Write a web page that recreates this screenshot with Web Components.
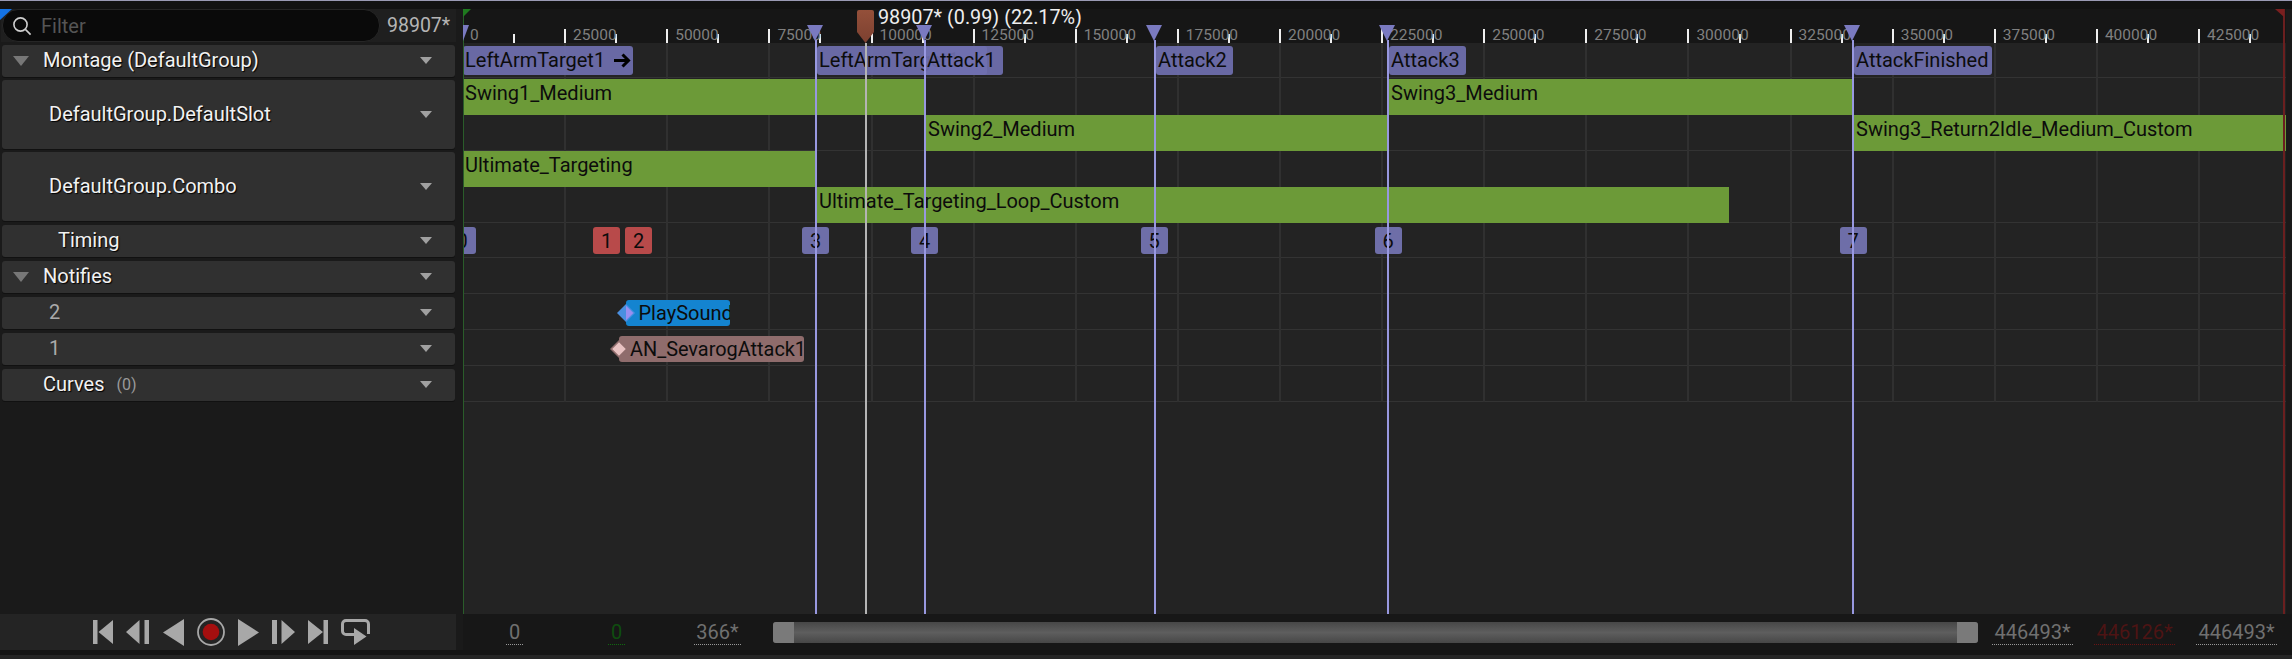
<!DOCTYPE html>
<html><head><meta charset="utf-8"><title>Montage</title>
<style>
html,body{margin:0;padding:0;background:#1a1a1a;width:2292px;height:659px;overflow:hidden;font-family:Roboto,"Liberation Sans",sans-serif}
</style></head><body>
<ue-app>
  <ue-sidebar slot="side">
    <ue-filter value="98907*"></ue-filter>
    <ue-row h="32" pad="43" expander>Montage (DefaultGroup)</ue-row>
    <ue-row h="69" pad="49">DefaultGroup.DefaultSlot</ue-row>
    <ue-row h="69" pad="49">DefaultGroup.Combo</ue-row>
    <ue-row h="32" pad="58" mt="1">Timing</ue-row>
    <ue-row h="32" pad="43" mt="1" expander>Notifies</ue-row>
    <ue-row h="32" pad="49" mt="1" dim>2</ue-row>
    <ue-row h="32" pad="49" mt="1" dim>1</ue-row>
    <ue-row h="32" pad="43" mt="1" count="(0)">Curves</ue-row>
  </ue-sidebar>
  <ue-timeline slot="time">
    <ue-ruler></ue-ruler>
    <ue-track h="35">
      <ue-clip kind="section" x="0" w="170" arrow>LeftArmTarget1</ue-clip>
      <ue-clip kind="section" x="354" w="170">LeftArmTarget1</ue-clip>
      <ue-clip kind="section" x="462" w="78">Attack1</ue-clip>
      <ue-clip kind="section" x="693" w="77">Attack2</ue-clip>
      <ue-clip kind="section" x="926" w="77">Attack3</ue-clip>
      <ue-clip kind="section" x="1391" w="138">AttackFinished</ue-clip>
    </ue-track>
    <ue-track h="73">
      <ue-clip kind="anim" y="1" x="0" w="461">Swing1_Medium</ue-clip>
      <ue-clip kind="anim" y="37" x="463" w="462">Swing2_Medium</ue-clip>
      <ue-clip kind="anim" y="1" x="926" w="464">Swing3_Medium</ue-clip>
      <ue-clip kind="anim" y="37" x="1391" w="432">Swing3_Return2Idle_Medium_Custom</ue-clip>
    </ue-track>
    <ue-track h="72">
      <ue-clip kind="anim" y="0" x="0" w="353">Ultimate_Targeting</ue-clip>
      <ue-clip kind="anim" y="36" x="354" w="912">Ultimate_Targeting_Loop_Custom</ue-clip>
    </ue-track>
    <ue-track h="35">
      <ue-mark x="-1" tone="purple">0</ue-mark>
      <ue-mark x="143.5" tone="red">1</ue-mark>
      <ue-mark x="175.5" tone="red">2</ue-mark>
      <ue-mark x="352.5" tone="purple">3</ue-mark>
      <ue-mark x="461.5" tone="purple">4</ue-mark>
      <ue-mark x="691" tone="purple">5</ue-mark>
      <ue-mark x="925" tone="purple">6</ue-mark>
      <ue-mark x="1390" tone="purple">7</ue-mark>
    </ue-track>
    <ue-track h="36"></ue-track>
    <ue-track h="36">
      <ue-notify x="163" w="104" tone="blue">PlaySound</ue-notify>
    </ue-track>
    <ue-track h="36">
      <ue-notify x="156" w="185" tone="rose">AN_SevarogAttack1</ue-notify>
    </ue-track>
    <ue-track h="36"></ue-track>
    <ue-overlay></ue-overlay>
  </ue-timeline>
  <ue-transport slot="transport"></ue-transport>
  <ue-range slot="range"></ue-range>
</ue-app>
<script>
function def(name,css,html,init){
  customElements.define(name,class extends HTMLElement{
    constructor(){super();this.attachShadow({mode:'open'});}
    connectedCallback(){
      this.shadowRoot.innerHTML='<style>'+css+'</style>'+(typeof html==='function'?html(this):html);
      if(init)init(this);
    }
  });
}
const STEP=102.12;
def('ue-app',`
:host{display:block;width:2292px;height:659px;position:relative;background:#1a1a1a;color:#eee;font:20px Roboto,"Liberation Sans",sans-serif}
.top{height:8px;border-top:1px solid #9a9ab4;background:#121212}
.main{display:grid;grid-template-columns:463px 1fr;height:605px}
.bottom{display:grid;grid-template-columns:463px 1fr;height:36px}
.foot{height:9px;display:flex;flex-direction:column;background:#141414}
.foot i{display:block;margin-top:5px;height:4px;background:#242424}
`,`<div class="top"></div>
<div class="main"><slot name="side"></slot><slot name="time"></slot></div>
<div class="bottom"><slot name="transport"></slot><slot name="range"></slot></div>
<div class="foot"><i></i></div>`);

def('ue-sidebar',`
:host{display:flex;flex-direction:column;gap:3px;position:relative;padding:0 8px 0 2px;background:#1a1a1a;box-sizing:border-box;height:605px}
.corner{position:absolute;left:0;top:0;width:0;height:0;border-top:11px solid #1473e6;border-right:12px solid transparent;z-index:2}
`,`<div class="corner"></div><slot></slot>`);

def('ue-filter',`
:host{display:flex;align-items:center;height:33px;margin:0 -1px;background:#1f1f1f}
.box{width:376px;height:31px;margin-left:1px;border-radius:16px;background:#0a0a0a;border:1px solid #262626;display:flex;align-items:center}
svg{margin-left:9px;flex:none}
.ph{margin-left:9px;color:#555;font-size:20px}
.val{margin-left:7px;color:#b5b5b5;font-size:19.500px}
`,el=>`<div class="box"><svg width="20" height="20" viewBox="0 0 20 20" fill="none" stroke="#cfcfcf" stroke-width="1.600"><circle cx="8.500" cy="8.500" r="6.600"/><path d="M13.400 13.400l5.200 5.200"/></svg><span class="ph">Filter</span></div><span class="val">${el.getAttribute('value')}</span>`);

def('ue-row',`
:host{display:flex;align-items:center;position:relative;box-sizing:border-box;background:#303030;border-radius:3px;box-shadow:0 1px 0 #111;flex:none}
.t{color:#f2f2f2;text-shadow:1px 1px 1px #000;font-size:20px;line-height:24px;white-space:nowrap;padding-bottom:2px}
.t.dim{color:#aaa;text-shadow:none}
.n{color:#9a9a9a;font-size:16px;margin-left:12px;padding-bottom:1px}
.exp{position:absolute;left:11px;top:50%;margin-top:-5px;width:0;height:0;border-left:8px solid transparent;border-right:8px solid transparent;border-top:10px solid #777}
.dd{position:absolute;right:23px;top:50%;margin-top:-4px;width:0;height:0;border-left:6.500px solid transparent;border-right:6.500px solid transparent;border-top:7px solid #a0a0a0}
`,el=>`${el.hasAttribute('expander')?'<i class="exp"></i>':''}<span class="t${el.hasAttribute('dim')?' dim':''}"><slot></slot></span>${el.getAttribute('count')?`<span class="n">${el.getAttribute('count')}</span>`:''}<i class="dd"></i>`,
el=>{el.style.height=el.getAttribute('h')+'px';el.style.paddingLeft=(el.getAttribute('pad')-2)+'px';if(el.getAttribute('mt'))el.style.marginTop=el.getAttribute('mt')+'px';});

def('ue-timeline',`
:host{display:flex;flex-direction:column;position:relative;width:1823px;height:605px;background:#232323;overflow:hidden}
`,`<slot></slot>`);

def('ue-ruler',`
:host{display:block;position:relative;flex:none;height:34px;background:#161616}
i{position:absolute;bottom:0;width:2px;background:#eee}
span{position:absolute;top:17px;color:#808080;font-size:15.500px;line-height:18px}
`,()=>{
  let h='';
  for(let k=1;k<=35;k++){
    const x=k*STEP/2;
    h+=`<i style="left:${(x-1).toFixed(1)}px;height:${k%2?9:14}px"></i>`;
  }
  for(let k=0;k<=17;k++){
    h+=`<span style="left:${(k*STEP+(k?8:7)).toFixed(1)}px">${k*25000}</span>`;
  }
  return h;
});

def('ue-track',`
:host{display:block;position:relative;flex:none;box-sizing:border-box;border-bottom:1px solid #333}
.g{position:absolute;top:0;bottom:-1px;width:2px;background:#303030}
`,()=>{let h='';for(let k=1;k<=17;k++)h+=`<div class="g" style="left:${(k*STEP-1).toFixed(1)}px"></div>`;return h+'<slot></slot>';},
el=>{el.style.height=el.getAttribute('h')+'px';});

def('ue-clip',`
:host{display:block;position:absolute;box-sizing:border-box;overflow:hidden;color:#0c0c0c;font-size:20px;line-height:24px;white-space:nowrap;border-radius:2px}
:host([kind=anim]){height:36px;background:#6c9a38;padding:2px 0 0 2px;border-radius:0}
:host([kind=section]){top:3px;height:29px;background:rgba(112,112,176,.92);padding:2px 0 0 2px;border-radius:3px}
svg{vertical-align:-1px;margin-left:9px}
`,el=>`<slot></slot>${el.hasAttribute('arrow')?'<svg width="17" height="15" viewBox="0 0 17 15" fill="none" stroke="#000" stroke-width="3"><path d="M0 7.500h14M8.500 1.500l6 6-6 6"/></svg>':''}`,
el=>{el.style.left=el.getAttribute('x')+'px';el.style.width=el.getAttribute('w')+'px';if(el.getAttribute('y'))el.style.top=el.getAttribute('y')+'px';});

def('ue-mark',`
:host{display:flex;align-items:center;justify-content:center;position:absolute;top:4px;width:27px;height:27px;border-radius:3px;color:#0c0c0c;font-size:20px;box-sizing:border-box}
:host([tone=red]){background:#b84a4a}
:host([tone=purple]){background:#6e6ea8}
`,`<slot></slot>`,el=>{el.style.left=(el.getAttribute('x')-13.5)+'px';});

def('ue-notify',`
:host{display:block;position:absolute;top:6px;height:26px;border-radius:3px;color:#0c0c0c;font-size:20px;line-height:27px;white-space:nowrap}
:host([tone=blue]){background:#1484d0}
:host([tone=rose]){background:#8f6c6c;font-size:19.900px}
.b{display:block;overflow:hidden;height:26px;padding-left:12px;box-sizing:border-box;border-radius:3px}
:host([tone=blue]) .b{padding-left:12.500px}
:host([tone=rose]) .b{padding-left:11px}
.d{position:absolute;left:-9px;top:4px;width:18px;height:18px;z-index:2}
`,el=>{
 const blue=el.getAttribute('tone')==='blue';
 return `<svg class="d" viewBox="0 0 16 16">${blue?'<path d="M8 0L16 8 8 16 0 8z" fill="#4a8fe0"/><path d="M8 1.500L14.500 8 8 14.500z" fill="#9a8ff0"/>':'<path d="M8 0L16 8 8 16 0 8z" fill="#8f6c6c"/><path d="M8 2L14 8 8 14 2 8z" fill="#e8c2c2"/>'}</svg><span class="b"><slot></slot></span>`;},
el=>{el.style.left=el.getAttribute('x')+'px';el.style.width=el.getAttribute('w')+'px';});

def('ue-overlay',`
:host{display:block;position:absolute;inset:0;pointer-events:none;z-index:5}
.l{position:absolute;top:31px;bottom:0;width:2px;background:#9898e0}
.tri{position:absolute;top:16px;width:0;height:0;border-left:8px solid transparent;border-right:8px solid transparent;border-top:16px solid #7a7ac0}
.start{position:absolute;left:0;top:0;bottom:0;width:1px;background:#2a5c2a}
.gc{position:absolute;left:0;top:0;width:0;height:0;border-top:8px solid #1f7a1f;border-right:8px solid transparent}
.pc{position:absolute;left:0;top:16px;width:0;height:0;border-top:16px solid #7a7ac0;border-right:6px solid transparent}
.end{position:absolute;left:1820px;top:0;bottom:0;width:2px;background:#6b1f1f}
.rc{position:absolute;left:1812px;top:0;width:0;height:0;border-top:8px solid #7a1f1f;border-left:9px solid transparent}
.sl{position:absolute;left:402px;top:34px;bottom:0;width:2px;background:#b4b4b4}
.sh{position:absolute;left:394px;top:1px;width:17px;height:33px}
.st{position:absolute;left:415px;top:0;height:18px;line-height:18px;color:#eee;font-size:19.800px;white-space:nowrap}
`,()=>{
  let h='<div class="start"></div><div class="gc"></div><div class="pc"></div><div class="end"></div><div class="rc"></div>';
  for(const x of [353,461.5,692,925,1390]){
    h+=`<div class="l" style="left:${x-1}px"></div><div class="tri" style="left:${x-9}px"></div>`;
  }
  h+='<div class="sl"></div><svg class="sh" viewBox="0 0 17 33"><defs><linearGradient id="g" x1="0" y1="0" x2="0" y2="1"><stop offset="0" stop-color="#94503a"/><stop offset="1" stop-color="#7c4030"/></linearGradient></defs><path d="M2 0h13a2 2 0 0 1 2 2v20L8.500 33 0 22V2a2 2 0 0 1 2-2z" fill="url(#g)"/></svg><div class="st">98907* (0.99) (22.17%)</div>';
  return h;
});

def('ue-transport',`
:host{display:flex;align-items:center;height:36px;background:#1a1a1a}
.bar{display:flex;align-items:center;gap:13px;width:456px;height:36px;background:#242424;box-sizing:border-box;padding-left:93px}
svg{display:block;flex:none;fill:#a8a8a8}
`,`<div class="bar">
<svg width="20" height="24" viewBox="0 0 20 24"><path d="M0 0h4.500v24H0zM20 0v24L5.500 12z"/></svg>
<svg width="24" height="24" viewBox="0 0 24 24"><path d="M13.500 0v24L0 12zM18.500 0h4.500v24h-4.500z"/></svg>
<svg width="21" height="27" viewBox="0 0 21 27"><path d="M21 0v27L0 13.500z"/></svg>
<svg width="28" height="28" viewBox="0 0 28 28"><circle cx="14" cy="14" r="13" fill="none" stroke="#a8a8a8" stroke-width="1.800"/><circle cx="14" cy="14" r="8.300" fill="#a50f0f"/></svg>
<svg width="21" height="27" viewBox="0 0 21 27"><path d="M0 0v27l21-13.500z"/></svg>
<svg width="23" height="24" viewBox="0 0 23 24"><path d="M0 0h5v24H0zM9.500 0v24L23 12z"/></svg>
<svg width="20" height="24" viewBox="0 0 20 24"><path d="M0 0v24l15-12zM15.500 0h4.500v24h-4.500z"/></svg>
<svg width="29" height="26" viewBox="0 0 29 26"><path d="M13 15.500H5A3.500 3.500 0 0 1 1.500 12V5A3.500 3.500 0 0 1 5 1.500h19A3.500 3.500 0 0 1 27.500 5v10" fill="none" stroke="#a8a8a8" stroke-width="3"/><path d="M13 9l12.500 8.500L13 26z"/></svg>
</div>`);

def('ue-range',`
:host{display:grid;grid-template-columns:310px 1205px 1fr;align-items:center;height:36px;background:#171717}
.left,.right{display:flex;align-items:center;height:36px}
.f{height:25px;margin-top:1px;text-align:center;color:#707070;font-size:20px;line-height:24px;border-bottom:1px dotted #999;box-sizing:border-box;white-space:nowrap}
.g{color:#0f4d0f;border-bottom-color:#0f6a0f}
.r{color:#4d1414;border-bottom-color:#6a1414}
.bar{height:21px;border-radius:3px;display:flex;overflow:hidden;margin-top:1px;background:linear-gradient(#474747,#5e5e5e 50%,#474747)}
.cap{width:21px;background:#7a7a7a}
.mid{flex:1}
`,`<div class="left"><div class="f" style="margin-left:43px;width:17px">0</div><div class="f g" style="margin-left:85px;width:17px">0</div><div class="f" style="margin-left:69px;width:47px">366*</div></div>
<div class="bar"><div class="cap"></div><div class="mid"></div><div class="cap"></div></div>
<div class="right"><div class="f" style="margin-left:14px;width:81px">446493*</div><div class="f r" style="margin-left:21px;width:81px">446126*</div><div class="f" style="margin-left:21px;width:81px">446493*</div></div>`);
</script>
</body></html>
